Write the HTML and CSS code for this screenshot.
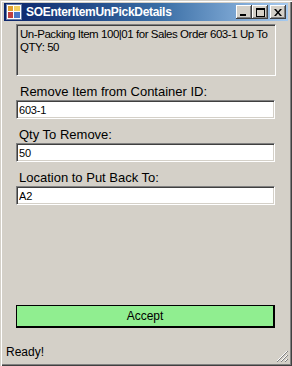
FILE: index.html
```html
<!DOCTYPE html>
<html lang="en">
<head>
  <meta charset="UTF-8">
  <title>SOEnterItemUnPickDetails</title>
  <link rel="stylesheet" href="styles.css">
</head>
<body>
  <div class="window">
    <div class="titlebar">
      <svg class="app-icon" width="16" height="16" viewBox="0 0 16 16">
        <rect x="0.5" y="0.5" width="15" height="15" fill="#fff" stroke="#6b7fa8"/>
        <rect x="2" y="2" width="5" height="5" fill="#e0a030"/>
        <rect x="8" y="2" width="6" height="5" fill="#f4d060"/>
        <rect x="2" y="8" width="5" height="6" fill="#c04040"/>
        <rect x="8" y="8" width="6" height="6" fill="#4a78c8"/>
      </svg>
      <span class="title">SOEnterItemUnPickDetails</span>
      <div class="caption-buttons">
        <button class="cap-btn" aria-label="Minimize">
          <svg width="8" height="7" viewBox="0 0 8 7"><rect x="0" y="5" width="6" height="2" fill="#000"/></svg>
        </button>
        <button class="cap-btn" aria-label="Maximize">
          <svg width="9" height="9" viewBox="0 0 9 9"><rect x="0.5" y="0.5" width="8" height="8" fill="none" stroke="#000"/><rect x="0" y="0" width="9" height="2" fill="#000"/></svg>
        </button>
        <button class="cap-btn close" aria-label="Close">
          <svg width="8" height="7" viewBox="0 0 8 7"><path d="M0 0h2l2 2.5 2-2.5h2l-3 3.5 3 3.5h-2l-2-2.5-2 2.5h-2l3-3.5z" fill="#000"/></svg>
        </button>
      </div>
    </div>

    <div class="client">
      <div class="message">Un-Packing Item 100|01 for Sales Order 603-1 Up To QTY: 50</div>

      <label class="field-label">Remove Item from Container ID:</label>
      <input class="textbox" type="text" value="603-1">

      <label class="field-label">Qty To Remove:</label>
      <input class="textbox" type="text" value="50">

      <label class="field-label">Location to Put Back To:</label>
      <input class="textbox" type="text" value="A2">

      <div class="spacer"></div>
      <button class="accept">Accept</button>
    </div>

    <div class="statusbar">
      <span>Ready!</span>
      <svg class="grip" width="12" height="12" viewBox="0 0 12 12">
        <path d="M11 1L1 11M11 5L5 11M11 9L9 11" stroke="#fff" stroke-width="1"/>
        <path d="M12 1L1 12M12 5L5 12M12 9L9 12" stroke="#808080" stroke-width="1"/>
      </svg>
    </div>
  </div>
</body>
</html>
```

FILE: styles.css
```css
html, body {
  margin: 0;
  padding: 0;
  width: 292px;
  height: 366px;
  overflow: hidden;
  background: #d4d0c8;
  font-family: 'Liberation Sans', Arial, sans-serif;
}
.window {
  box-sizing: border-box;
  width: 292px;
  height: 366px;
  display: flex;
  flex-direction: column;
  padding: 3px 4px 3px 4px;
  background: #d4d0c8;
  box-shadow: inset 1px 1px 0 #d4d0c8, inset 2px 2px 0 #fff, inset -1px -1px 0 #404040, inset -2px -2px 0 #808080;
}
.titlebar {
  height: 18px;
  display: flex;
  align-items: center;
  background: linear-gradient(90deg, #0a246a 0%, #3a6ea5 55%, #a6caf0 100%);
  padding: 0 2px 0 1px;
}
.app-icon {
  margin: 0 4px 0 1px;
}
.title {
  flex: 1;
  color: #fff;
  font-weight: bold;
  font-size: 12px;
  letter-spacing: -0.3px;
  white-space: nowrap;
}
.caption-buttons {
  display: flex;
  align-items: center;
}
.cap-btn {
  box-sizing: border-box;
  width: 16px;
  height: 14px;
  padding: 0;
  border: none;
  background: #d4d0c8;
  display: flex;
  align-items: center;
  justify-content: center;
  box-shadow: inset -1px -1px 0 #404040, inset 1px 1px 0 #fff, inset -2px -2px 0 #808080;
}
.cap-btn.close {
  margin-left: 2px;
}
.client {
  flex: 1;
  display: flex;
  flex-direction: column;
  padding: 3px 12px 0 12px;
}
.message {
  box-sizing: border-box;
  height: 52px;
  padding: 3px 1px 3px 3px;
  font-size: 11.5px;
  letter-spacing: -0.45px;
  line-height: 13px;
  color: #000;
  border: 1px solid;
  border-color: #808080 #fff #fff #808080;
  box-shadow: inset 1px 1px 0 #404040;
}
.field-label {
  font-size: 13px;
  color: #000;
  margin: 8px 0 1px 4px;
  line-height: 15px;
}
.field-label + .textbox + .field-label {
  margin-left: 3px;
}
.textbox {
  box-sizing: border-box;
  width: 259px;
  height: 19px;
  margin: 0;
  padding: 0 2px;
  font-family: 'Liberation Sans', Arial, sans-serif;
  font-size: 11px;
  letter-spacing: -0.2px;
  color: #000;
  background: #fff;
  border: 1px solid;
  border-color: #808080 #fff #fff #808080;
  box-shadow: inset 1px 1px 0 #404040, inset -1px -1px 0 #d4d0c8;
  outline: none;
}
.spacer {
  flex: 1;
}
.accept {
  box-sizing: border-box;
  width: 259px;
  height: 23px;
  margin: 0 0 13px 0;
  background: #90ee90;
  border: 2px solid #000;
  border-top-width: 1px;
  border-left-width: 1px;
  font-family: 'Liberation Sans', Arial, sans-serif;
  font-size: 12px;
  color: #000;
  padding: 0;
}
.statusbar {
  height: 22px;
  display: flex;
  align-items: center;
  justify-content: space-between;
  padding: 0 0 0 2px;
  font-size: 12px;
  color: #000;
}
.grip {
  align-self: flex-end;
  margin-bottom: 1px;
}
```
